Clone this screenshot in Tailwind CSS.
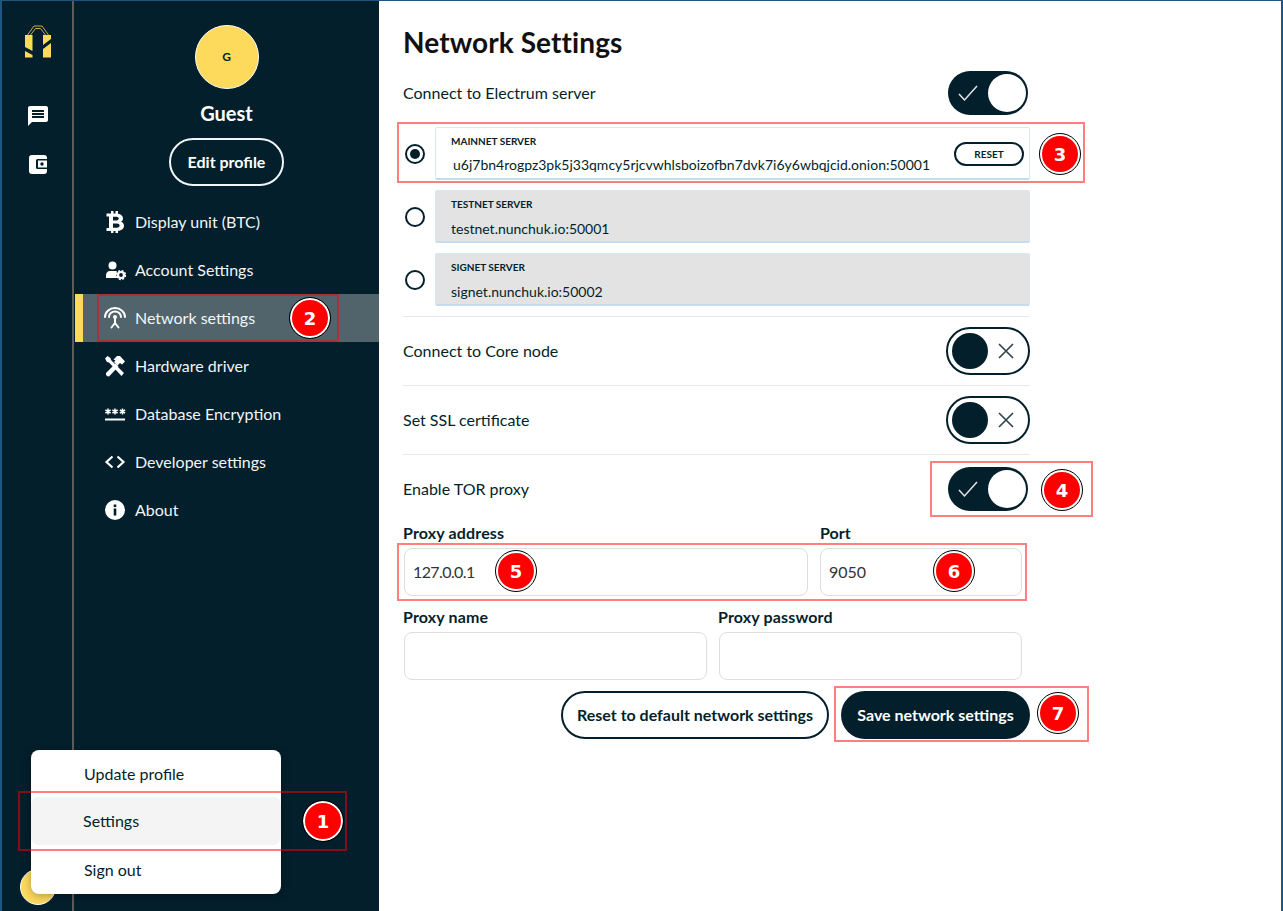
<!DOCTYPE html>
<html lang="en">
<head>
    <meta charset="UTF-8">
    <title>Network Settings</title>
    <script src="https://cdn.jsdelivr.net/npm/@tailwindcss/browser@4"></script>
</head>
<body class="font-['Lato',sans-serif] text-[#031f2b] bg-white">
<div class="relative w-[1283px] h-[911px] overflow-hidden flex border-t border-x-2 border-[#1f5680]">
    <!-- icon rail -->
    <div class="w-[70px] shrink-0 bg-[#031f2b] flex flex-col items-center pt-[24px]">
        <svg class="ml-[2px]" width="28" height="33" viewBox="0 0 28 33">
            <path fill="#fdd95c" d="M1 10h7.500v16L1 22zM1 26l7.500 4v2.500H1zM19 10h8v4l-8 6zM19 24l8-6v14.500h-8z"/>
            <path fill="none" stroke="#c9ad4c" stroke-width="1" d="M3.500 10 10 1h8l6.500 9M6.500 10 11.500 3.500h5L21.500 10"/>
        </svg>
        <svg class="mt-[46px] ml-[2px]" width="24" height="24" viewBox="0 0 24 24" fill="#fff"><path d="M20 2H4c-1.100 0-1.990.9-1.990 2L2 22l4-4h14c1.100 0 2-.9 2-2V4c0-1.100-.9-2-2-2zm-2 12H6v-2h12v2zm0-3H6V9h12v2zm0-3H6V6h12v2z"/></svg>
        <svg class="mt-[24px] ml-[2px]" width="24" height="24" viewBox="0 0 24 24">
            <rect x="3" y="3" width="18" height="19" rx="3" fill="#fff"/>
            <rect x="10" y="7" width="12" height="10" rx="1.500" fill="#031f2b"/>
            <rect x="12" y="8.500" width="9" height="7" fill="#fff"/>
            <circle cx="16" cy="12" r="1.700" fill="#031f2b"/>
        </svg>
    </div>
    <div class="w-[2px] shrink-0 bg-[#5c5c5c]"></div>
    <!-- sidebar -->
    <div class="w-[305px] shrink-0 bg-[#031f2b] text-white flex flex-col">
        <div class="flex flex-col items-center pt-[24px]">
            <div class="w-[64px] h-[64px] rounded-full bg-[#fdd95c] border border-white flex items-center justify-center text-[#031f2b] text-[12px] font-bold">G</div>
            <div class="mt-[10px] text-[20px] leading-[28px] font-bold">Guest</div>
            <div class="mt-[11px] h-[48px] px-[17px] rounded-full border-2 border-[#f2f5f6] flex items-center text-[16px] font-bold">Edit profile</div>
        </div>
        <nav class="mt-[12px] flex flex-col text-[16px] text-[#f1f5f8]">
            <div class="h-[48px] flex items-center pl-[29px]">
                <svg width="24" height="24" viewBox="0 0 24 24" class="mr-[8px]"><path fill="#fff" fill-rule="evenodd" d="M8 1h2.500v2.500h2V1H15v2.700c3.200.5 5 2.300 5 4.700 0 1.500-.8 2.700-2.100 3.300 2 .6 3.100 2.100 3.100 4 0 2.900-2.200 4.800-6 5.100V23h-2.500v-2h-2v2H8v-2H3.500v-3H6V6.500H3.500v-3H8zM10 6.800v3.700h3.500c1.300 0 2.200-.8 2.200-1.900s-.9-1.800-2.200-1.800zM10 13.500v4.200h4c1.600 0 2.600-.8 2.600-2.100s-1-2.100-2.600-2.100z"/></svg>
                <span>Display unit (BTC)</span>
            </div>
            <div class="h-[48px] flex items-center pl-[29px]">
                <svg width="24" height="24" viewBox="0 0 24 24" class="mr-[8px]"><circle cx="9.500" cy="7.500" r="4" fill="#fff"/><path fill="#fff" d="M3 20v-2.500C3 15 4.500 13 7 13h5c.8 0 1.500.2 2 .4-.9 1.700-.9 4.900 0 6.600z"/><circle cx="18" cy="17" r="3" fill="none" stroke="#fff" stroke-width="2.200"/><circle cx="18" cy="17" r="4.400" fill="none" stroke="#fff" stroke-width="1.500" stroke-dasharray="2 1.460"/></svg>
                <span>Account Settings</span>
            </div>
            <div class="ml-[1px] h-[48px] flex items-center pl-[20px] bg-[#51646b] border-l-[8px] border-[#fdd95c]">
                <svg width="24" height="24" viewBox="0 0 24 24" class="mr-[8px]" fill="none" stroke="#fff" stroke-width="2" stroke-linecap="round"><path d="M2 11a10 9 0 0 1 20 0"/><path d="M6 11a6 5.500 0 0 1 12 0"/><circle cx="12" cy="11" r="2" fill="#fff" stroke="none"/><path d="M12 12v6M12 17l-3.500 4.500M12 17l3.500 4.500"/></svg>
                <span>Network settings</span>
            </div>
            <div class="h-[48px] flex items-center pl-[29px]">
                <svg width="24" height="24" viewBox="0 0 24 24" class="mr-[8px]" fill="#fff"><path d="M2 4.500 4.500 2 7.500 4l.5 2 13 13-2.500 3L6 8.500 4 8z"/><path d="M3 19 12.500 9.500l3 3L6 22.500q-1.500 0-3-1.500z"/><path d="M10.500 5.500 14 2h3l5 5.500-3 3-2-1.500-2.500 2.500-3.500-3.500 1.500-1.500z"/></svg>
                <span>Hardware driver</span>
            </div>
            <div class="h-[48px] flex items-center pl-[29px]">
                <svg width="24" height="24" viewBox="0 0 24 24" class="mr-[8px]" fill="none" stroke="#fff"><rect x="2" y="16.500" width="20" height="2" fill="#fff" stroke="none"/><path stroke-width="1.500" d="M5 6.500v6M2.400 8l5.200 3M7.600 8l-5.200 3M12 6.500v6M9.400 8l5.200 3M14.600 8l-5.200 3M19.500 6.500v6M16.900 8l5.200 3M22.100 8l-5.200 3"/></svg>
                <span>Database Encryption</span>
            </div>
            <div class="h-[48px] flex items-center pl-[29px]">
                <svg width="24" height="24" viewBox="0 0 24 24" class="mr-[8px]" fill="none" stroke="#fff" stroke-width="2.200"><path d="M9.500 6.500 3.500 12l6 5.500M14.500 6.500l6 5.500-6 5.500"/></svg>
                <span>Developer settings</span>
            </div>
            <div class="h-[48px] flex items-center pl-[29px]">
                <svg width="24" height="24" viewBox="0 0 24 24" class="mr-[8px]"><circle cx="12" cy="12" r="10" fill="#fff"/><rect x="10.700" y="10.500" width="2.600" height="7" fill="#031f2b"/><rect x="10.700" y="6.500" width="2.600" height="2.600" fill="#031f2b"/></svg>
                <span>About</span>
            </div>
        </nav>
    </div>
    <!-- main -->
    <main class="flex-1 pl-[24px]">
        <div class="w-[627px] flex flex-col">
            <h1 class="h-[70px] pt-[23px] text-[28px] leading-[36px] font-bold text-[#111] tracking-[0.1px]">Network Settings</h1>
            <div class="h-[44px] flex items-center justify-between pr-[2px]">
                <span class="text-[16px]">Connect to Electrum server</span>
                <div class="w-[80px] h-[44px] rounded-full bg-[#031f2b] flex items-center pl-[10px] pr-[2px] justify-between">
                    <svg width="20" height="20" viewBox="0 0 20 20" fill="none" stroke="#e4e8ea" stroke-width="1.500"><path d="M1 11l5.500 6L19 3"/></svg>
                    <div class="w-[38px] h-[38px] rounded-full bg-white"></div>
                </div>
            </div>
            <div class="mt-[12px] flex flex-col gap-[10px]">
                <div class="flex items-center">
                    <div class="ml-[2px] mr-[10px] mt-[1px] w-[20px] h-[20px] rounded-full border-2 border-[#031f2b] flex items-center justify-center"><div class="w-[10px] h-[10px] rounded-full bg-[#031f2b]"></div></div>
                    <div class="relative flex-1 h-[53px] rounded-[2px] border border-[#d9e6f3] border-b-2 border-b-[#c6dbee] pl-[15px] pt-[6px]">
                        <div class="text-[10px] leading-[14px] font-bold">MAINNET SERVER</div>
                        <div class="mt-[7px] ml-[2px] text-[14px] leading-[20px]">u6j7bn4rogpz3pk5j33qmcy5rjcvwhlsboizofbn7dvk7i6y6wbqjcid.onion:50001</div>
                        <div class="absolute right-[5px] top-[14px] w-[70px] h-[24px] rounded-full border-2 border-[#031f2b] flex items-center justify-center text-[10px] font-bold">RESET</div>
                    </div>
                </div>
                <div class="flex items-center">
                    <div class="ml-[2px] mr-[10px] mt-[1px] w-[20px] h-[20px] rounded-full border-2 border-[#031f2b]"></div>
                    <div class="flex-1 h-[53px] rounded-[2px] bg-[#e3e3e3] border border-[#d9e6f3] border-b-2 border-b-[#c6dbee] pl-[15px] pt-[6px]">
                        <div class="text-[10px] leading-[14px] font-bold">TESTNET SERVER</div>
                        <div class="mt-[8px] text-[14px] leading-[20px]">testnet.nunchuk.io:50001</div>
                    </div>
                </div>
                <div class="flex items-center">
                    <div class="ml-[2px] mr-[10px] mt-[1px] w-[20px] h-[20px] rounded-full border-2 border-[#031f2b]"></div>
                    <div class="flex-1 h-[53px] rounded-[2px] bg-[#e3e3e3] border border-[#d9e6f3] border-b-2 border-b-[#c6dbee] pl-[15px] pt-[6px]">
                        <div class="text-[10px] leading-[14px] font-bold">SIGNET SERVER</div>
                        <div class="mt-[8px] text-[14px] leading-[20px]">signet.nunchuk.io:50002</div>
                    </div>
                </div>
            </div>
            <div class="mt-[10px] h-px bg-[#e6e8ea]"></div>
            <div class="mt-[10px] h-[48px] flex items-center justify-between">
                <span class="text-[16px]">Connect to Core node</span>
                <div class="w-[84px] h-[48px] rounded-full border-2 border-[#031f2b] flex items-center pl-[4px] pr-[14px] justify-between">
                    <div class="w-[36px] h-[36px] rounded-full bg-[#031f2b]"></div>
                    <svg width="16" height="16" viewBox="0 0 16 16" fill="none" stroke="#31474f" stroke-width="1.700"><path d="M1 1l14 14M15 1L1 15"/></svg>
                </div>
            </div>
            <div class="mt-[10px] h-px bg-[#e6e8ea]"></div>
            <div class="mt-[10px] h-[48px] flex items-center justify-between">
                <span class="text-[16px]">Set SSL certificate</span>
                <div class="w-[84px] h-[48px] rounded-full border-2 border-[#031f2b] flex items-center pl-[4px] pr-[14px] justify-between">
                    <div class="w-[36px] h-[36px] rounded-full bg-[#031f2b]"></div>
                    <svg width="16" height="16" viewBox="0 0 16 16" fill="none" stroke="#31474f" stroke-width="1.700"><path d="M1 1l14 14M15 1L1 15"/></svg>
                </div>
            </div>
            <div class="mt-[10px] h-px bg-[#e6e8ea]"></div>
            <div class="mt-[12px] h-[44px] flex items-center justify-between pr-[2px]">
                <span class="text-[16px]">Enable TOR proxy</span>
                <div class="w-[80px] h-[44px] rounded-full bg-[#031f2b] flex items-center pl-[10px] pr-[2px] justify-between">
                    <svg width="20" height="20" viewBox="0 0 20 20" fill="none" stroke="#e4e8ea" stroke-width="1.500"><path d="M1 11l5.500 6L19 3"/></svg>
                    <div class="w-[38px] h-[38px] rounded-full bg-white"></div>
                </div>
            </div>
            <div class="mt-[12px] flex gap-[12px] pl-[1px] pr-[8px]">
                <div class="w-[404px]">
                    <div class="-ml-[1px] text-[16px] leading-[20px] font-bold tracking-[0.15px]">Proxy address</div>
                    <div class="mt-[5px] h-[48px] rounded-[8px] border border-[#dedede] flex items-center pl-[8px] text-[16px] text-[#333] tracking-[-0.6px]">127.0.0.1</div>
                </div>
                <div class="flex-1">
                    <div class="text-[16px] leading-[20px] font-bold">Port</div>
                    <div class="mt-[5px] h-[48px] rounded-[8px] border border-[#dedede] flex items-center pl-[8px] text-[16px] text-[#333]">9050</div>
                </div>
            </div>
            <div class="mt-[11px] flex gap-[12px] pl-[1px] pr-[8px]">
                <div class="w-[303px]">
                    <div class="-ml-[1px] text-[16px] leading-[20px] font-bold tracking-[0.15px]">Proxy name</div>
                    <div class="mt-[5px] h-[48px] rounded-[8px] border border-[#dedede]"></div>
                </div>
                <div class="flex-1">
                    <div class="-ml-[1px] text-[16px] leading-[20px] font-bold tracking-[0.15px]">Proxy password</div>
                    <div class="mt-[5px] h-[48px] rounded-[8px] border border-[#dedede]"></div>
                </div>
            </div>
            <div class="mt-[11px] flex justify-end gap-[12px]">
                <div class="h-[48px] w-[268px] rounded-full border-2 border-[#031f2b] flex items-center justify-center text-[16px] font-bold">Reset to default network settings</div>
                <div class="h-[48px] w-[189px] rounded-full bg-[#031f2b] text-white flex items-center justify-center text-[16px] font-bold">Save network settings</div>
            </div>
        </div>
    </main>

    <!-- account menu -->
    <div class="absolute left-[18px] top-[868px] w-[36px] h-[36px] rounded-full bg-[#fdd95c] border border-white"></div>
    <div class="absolute left-[29px] top-[749px] w-[250px] h-[144px] bg-white rounded-[8px] shadow-[0_2px_8px_rgba(0,0,0,0.3)] text-[16px] text-[#031f2b] flex flex-col">
        <div class="h-[48px] shrink-0 flex items-center pl-[53px]">Update profile</div>
        <div class="h-[48px] shrink-0 -mt-[1px] mb-[1px] flex items-center pl-[52px] bg-[#f4f4f4] rounded-[8px]">Settings</div>
        <div class="h-[48px] shrink-0 flex items-center pl-[53px]">Sign out</div>
    </div>

    <!-- annotations -->
    <div class="absolute left-[16px] top-[790px] w-[329px] h-[60px] border-2 border-[#ff0000]/50"></div>
    <div class="absolute left-[95px] top-[293px] w-[242px] h-[48px] border-2 border-[#ff0000]/50"></div>
    <div class="absolute left-[395px] top-[121px] w-[688px] h-[61px] border-2 border-[#ff0000]/50"></div>
    <div class="absolute left-[928px] top-[460px] w-[163px] h-[56px] border-2 border-[#ff0000]/50"></div>
    <div class="absolute left-[395px] top-[542px] w-[630px] h-[58px] border-2 border-[#ff0000]/50"></div>
    <div class="absolute left-[832px] top-[685px] w-[255px] h-[56px] border-2 border-[#ff0000]/50"></div>

    <div class="absolute left-[301px] top-[800px] w-[40px] h-[40px] rounded-full bg-[#ff0000] border-[2px] border-white outline outline-1 outline-black text-white font-['DejaVu_Sans',sans-serif] font-bold text-[18px] flex items-center justify-center">1</div>
    <div class="absolute left-[288px] top-[297px] w-[40px] h-[40px] rounded-full bg-[#ff0000] border-[2px] border-white outline outline-1 outline-black text-white font-['DejaVu_Sans',sans-serif] font-bold text-[18px] flex items-center justify-center">2</div>
    <div class="absolute left-[1038px] top-[133px] w-[40px] h-[40px] rounded-full bg-[#ff0000] border-[2px] border-white outline outline-1 outline-black text-white font-['DejaVu_Sans',sans-serif] font-bold text-[18px] flex items-center justify-center">3</div>
    <div class="absolute left-[1040px] top-[469px] w-[40px] h-[40px] rounded-full bg-[#ff0000] border-[2px] border-white outline outline-1 outline-black text-white font-['DejaVu_Sans',sans-serif] font-bold text-[18px] flex items-center justify-center">4</div>
    <div class="absolute left-[494px] top-[550px] w-[40px] h-[40px] rounded-full bg-[#ff0000] border-[2px] border-white outline outline-1 outline-black text-white font-['DejaVu_Sans',sans-serif] font-bold text-[18px] flex items-center justify-center">5</div>
    <div class="absolute left-[932px] top-[550px] w-[40px] h-[40px] rounded-full bg-[#ff0000] border-[2px] border-white outline outline-1 outline-black text-white font-['DejaVu_Sans',sans-serif] font-bold text-[18px] flex items-center justify-center">6</div>
    <div class="absolute left-[1036px] top-[692px] w-[40px] h-[40px] rounded-full bg-[#ff0000] border-[2px] border-white outline outline-1 outline-black text-white font-['DejaVu_Sans',sans-serif] font-bold text-[18px] flex items-center justify-center">7</div>
</div>
</body>
</html>
